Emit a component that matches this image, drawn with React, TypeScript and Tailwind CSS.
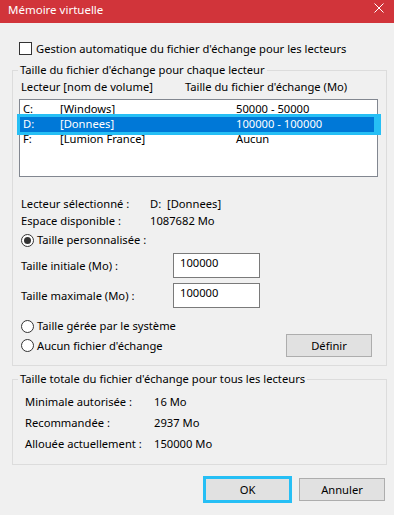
import React from "react";

const font = { fontFamily: '"Noto Sans", "Open Sans", sans-serif' };

const Radio = ({ checked }: { checked?: boolean }) => (
  <span className="w-[13px] h-[13px] rounded-full border border-[#333] bg-white flex items-center justify-center shrink-0">
    {checked && <span className="w-[7px] h-[7px] rounded-full bg-[#333]" />}
  </span>
);

const drives = [
  { letter: "C:", name: "[Windows]", size: "50000 - 50000" },
  { letter: "D:", name: "[Donnees]", size: "100000 - 100000", selected: true },
  { letter: "F:", name: "[Lumion France]", size: "Aucun" },
];

const App = () => {
  return (
    <div
      className="w-[394px] h-[515px] bg-[#f0f0f0] text-[11.2px] leading-[14px] text-black overflow-hidden"
      style={font}
    >
      {/* Title bar */}
      <div className="h-[23px] bg-[#d1343a] flex items-start justify-between text-white">
        <span className="ml-[8px] mt-[3px] text-[11.5px]">Mémoire virtuelle</span>
        <svg width="10" height="10" viewBox="0 0 10 10" className="mt-[3px] mr-[10px]">
          <path d="M0.5 0.5 L9.5 9.5 M9.5 0.5 L0.5 9.5" stroke="white" strokeWidth="1" />
        </svg>
      </div>

      {/* Auto checkbox */}
      <div className="mt-[19px] ml-[19px] flex items-center h-[13px] gap-[4px]">
        <span className="w-[13px] h-[13px] border border-[#333] bg-white shrink-0" />
        <span>Gestion automatique du fichier d'échange pour les lecteurs</span>
      </div>

      {/* Per-drive group */}
      <fieldset className="mt-[8px] ml-[12px] mr-[7px] border border-[#dcdcdc] pb-[8px]">
        <legend className="ml-[5px] px-[2px] leading-[14px]">
          Taille du fichier d'échange pour chaque lecteur
        </legend>
        <div className="mt-[3px] h-[14px] flex pl-[8px]">
          <span className="w-[164px]">Lecteur [nom de volume]</span>
          <span>Taille du fichier d'échange (Mo)</span>
        </div>

        <div className="mt-[5px] ml-[6px] w-[359px] h-[78px] border border-[#828790] bg-white pt-[1px]">
          {drives.map((d) => (
            <div key={d.letter} className="relative h-[15px] flex items-center">
              {d.selected && (
                <div className="absolute -left-[3px] -right-[4px] -top-[2px] -bottom-[4px] border-[3px] border-r-[7px] border-[#26bff5] bg-[#0078d7]" />
              )}
              <span className={`relative flex ${d.selected ? "text-white" : ""}`}>
                <span className="w-[40px] pl-[3px]">{d.letter}</span>
                <span className="w-[176px]">{d.name}</span>
                <span>{d.size}</span>
              </span>
            </div>
          ))}
        </div>

        <div className="pl-[8px]">
          <div className="mt-[20px] flex h-[14px]">
            <span className="w-[129px]">Lecteur sélectionné :</span>
            <span>D:&nbsp;&nbsp;[Donnees]</span>
          </div>
          <div className="mt-[3px] flex h-[14px]">
            <span className="w-[129px]">Espace disponible :</span>
            <span>1087682 Mo</span>
          </div>
          <div className="mt-[5px] flex items-center h-[14px] gap-[3px]">
            <Radio checked />
            <span>Taille personnalisée :</span>
          </div>
          <div className="mt-[6px] flex items-center h-[25px]">
            <span className="w-[152px]">Taille initiale (Mo) :</span>
            <span className="w-[87px] h-[25px] border border-[#7a7a7a] bg-white pl-[6px] pt-[2px]">100000</span>
          </div>
          <div className="mt-[5px] flex items-center h-[25px]">
            <span className="w-[152px]">Taille maximale (Mo) :</span>
            <span className="w-[87px] h-[25px] border border-[#7a7a7a] bg-white pl-[6px] pt-[2px]">100000</span>
          </div>
          <div className="mt-[11px] flex items-center h-[14px] gap-[3px]">
            <Radio />
            <span>Taille gérée par le système</span>
          </div>
          <div className="mt-[1px] flex items-center h-[23px] pr-[14px]">
            <Radio />
            <span className="ml-[3px] flex-1">Aucun fichier d'échange</span>
            <button className="w-[86px] h-[23px] border border-[#adadad] bg-[#e1e1e1]">Définir</button>
          </div>
        </div>
      </fieldset>

      {/* Totals group */}
      <fieldset className="mt-[6px] ml-[12px] mr-[7px] border border-[#dcdcdc] pb-[13px] pl-[12px]">
        <legend className="-ml-[7px] px-[2px] leading-[14px]">
          Taille totale du fichier d'échange pour tous les lecteurs
        </legend>
        <div className="mt-[9px] flex h-[14px]">
          <span className="w-[129px]">Minimale autorisée :</span>
          <span>16 Mo</span>
        </div>
        <div className="mt-[7px] flex h-[14px]">
          <span className="w-[129px]">Recommandée :</span>
          <span>2937 Mo</span>
        </div>
        <div className="mt-[7px] flex h-[14px]">
          <span className="w-[129px]">Allouée actuellement :</span>
          <span>150000 Mo</span>
        </div>
      </fieldset>

      {/* Buttons */}
      <div className="mt-[11px] flex items-center justify-end gap-[7px] pr-[9px] h-[27px]">
        <button className="w-[89px] h-[27px] border-[3px] border-[#26bff5] bg-[#e1e1e1]">OK</button>
        <button className="w-[86px] h-[23px] border border-[#adadad] bg-[#e1e1e1]">Annuler</button>
      </div>
    </div>
  );
};

export default App;
